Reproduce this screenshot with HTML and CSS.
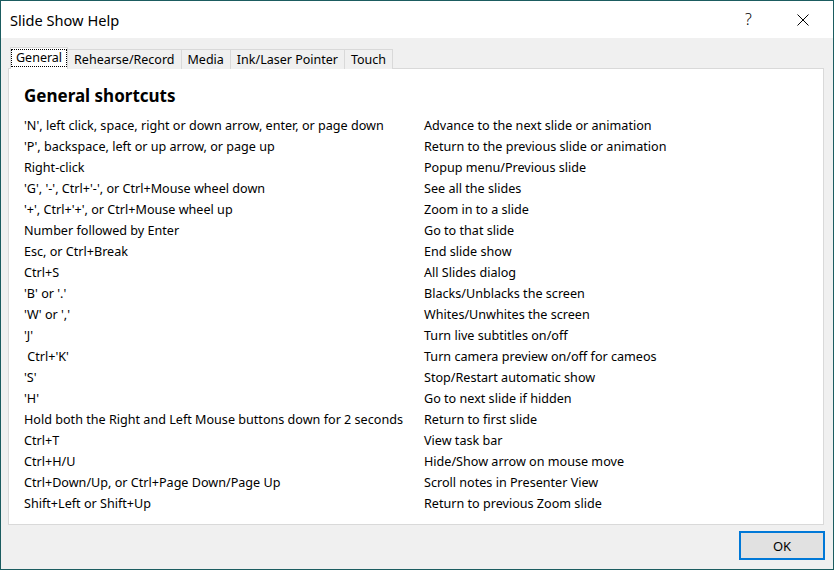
FILE: index.html
```html
<!DOCTYPE html>
<html>
<head>
<meta charset="utf-8">
<link rel="stylesheet" href="styles.css">
</head>
<body>
<div class="window">
  <div class="titlebar">
    <div class="title">Slide Show Help</div>
    <div class="tb-help">?</div>
    <div class="tb-close">
      <svg width="12" height="12" viewBox="0 0 12 12"><path d="M0.5 0.5 L11.5 11.5 M11.5 0.5 L0.5 11.5" stroke="#000" stroke-width="1" fill="none"/></svg>
    </div>
  </div>
  <div class="client">
    <div class="tabs">
      <div class="tab selected"><span class="focus">General</span></div>
      <div class="tab">Rehearse/Record</div>
      <div class="tab">Media</div>
      <div class="tab">Ink/Laser Pointer</div>
      <div class="tab">Touch</div>
    </div>
    <div class="panel">
      <h1 class="heading">General shortcuts</h1>
      <div class="rows">
        <div>'N', left click, space, right or down arrow, enter, or page down</div><div>Advance to the next slide or animation</div>
        <div>'P', backspace, left or up arrow, or page up</div><div>Return to the previous slide or animation</div>
        <div>Right-click</div><div>Popup menu/Previous slide</div>
        <div>'G', '-', Ctrl+'-', or Ctrl+Mouse wheel down</div><div>See all the slides</div>
        <div>'+', Ctrl+'+', or Ctrl+Mouse wheel up</div><div>Zoom in to a slide</div>
        <div>Number followed by Enter</div><div>Go to that slide</div>
        <div>Esc, or Ctrl+Break</div><div>End slide show</div>
        <div>Ctrl+S</div><div>All Slides dialog</div>
        <div>'B' or '.'</div><div>Blacks/Unblacks the screen</div>
        <div>'W' or ','</div><div>Whites/Unwhites the screen</div>
        <div>'J'</div><div>Turn live subtitles on/off</div>
        <div>&nbsp;Ctrl+'K'</div><div>Turn camera preview on/off for cameos</div>
        <div>'S'</div><div>Stop/Restart automatic show</div>
        <div>'H'</div><div>Go to next slide if hidden</div>
        <div>Hold both the Right and Left Mouse buttons down for 2 seconds</div><div>Return to first slide</div>
        <div>Ctrl+T</div><div>View task bar</div>
        <div>Ctrl+H/U</div><div>Hide/Show arrow on mouse move</div>
        <div>Ctrl+Down/Up, or Ctrl+Page Down/Page Up</div><div>Scroll notes in Presenter View</div>
        <div>Shift+Left or Shift+Up</div><div>Return to previous Zoom slide</div>
      </div>
    </div>
    <div class="footer">
      <button class="ok">OK</button>
    </div>
  </div>
</div>
</body>
</html>
```
FILE: styles.css
```css
html, body {
  margin: 0;
  padding: 0;
}
body {
  width: 834px;
  height: 570px;
  overflow: hidden;
  font-family: "Noto Sans", "Open Sans", sans-serif;
  color: #000;
}
.window {
  box-sizing: border-box;
  width: 834px;
  height: 570px;
  border: 1px solid #1b5c60;
  display: flex;
  flex-direction: column;
  background: #f0f0f0;
}
.titlebar {
  height: 37px;
  background: #fff;
  display: flex;
  align-items: center;
}
.title {
  flex: 1;
  padding-left: 9px;
  font-size: 14.6px;
  line-height: 20px;
}
.tb-help {
  width: 52px;
  font-size: 16px;
  line-height: 20px;
  font-weight: 300;
  text-align: left;
  padding-bottom: 1px;
}
.tb-close {
  width: 36px;
  height: 12px;
  display: flex;
  align-items: flex-start;
}
.tb-close svg { display: block; }
.client {
  flex: 1;
  display: flex;
  flex-direction: column;
  padding: 9px 9px 0 7px;
}
.tabs {
  display: flex;
  align-items: flex-end;
  padding-left: 2px;
  position: relative;
  z-index: 1;
  margin-bottom: -1px;
}
.tab {
  box-sizing: border-box;
  height: 20px;
  border: 1px solid #d9d9d9;
  border-left: none;
  border-bottom: none;
  background: #f0f0f0;
  font-size: 12.5px;
  line-height: 19px;
  padding: 0 6px;
  white-space: nowrap;
}
.tab.selected {
  height: 22px;
  background: #fff;
  border-left: 1px solid #d9d9d9;
  padding: 2px 1px 0 1px;
  line-height: 16px;
}
.focus {
  display: block;
  outline: 1px dotted #000;
  outline-offset: 0;
  padding: 0 4px;
  height: 16px;
}
.panel {
  box-sizing: border-box;
  height: 457px;
  background: #fff;
  border: 1px solid #d9d9d9;
  padding: 14px 15px 0 15px;
}
.heading {
  margin: 0 0 6px 0;
  font-size: 17px;
  font-weight: bold;
  line-height: 26px;
}
.rows {
  display: grid;
  grid-template-columns: 400px 1fr;
  grid-auto-rows: 21px;
  font-size: 12.6px;
  line-height: 21px;
  white-space: pre;
}
.footer {
  display: flex;
  justify-content: flex-end;
  padding-top: 6px;
}
.ok {
  box-sizing: border-box;
  width: 86px;
  height: 29px;
  margin-right: -1px;
  border: 2px solid #0078d7;
  background: #e1e1e1;
  font-family: "Noto Sans", "Open Sans", sans-serif;
  font-size: 13px;
  color: #000;
  padding: 0;
}
```
